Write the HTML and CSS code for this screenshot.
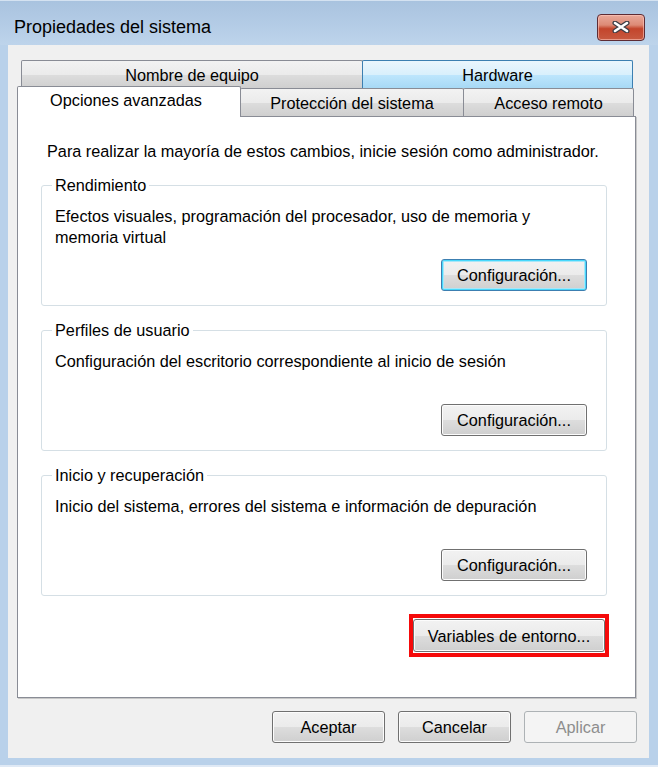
FILE: index.html
```html
<!DOCTYPE html>
<html lang="es">
<head>
<meta charset="utf-8">
<title>Propiedades del sistema</title>
<link rel="stylesheet" href="styles.css">
</head>
<body>
<div class="window">
  <div class="titlebar">
    <span class="title">Propiedades del sistema</span>
    <button class="close" aria-label="Cerrar">
      <svg width="18" height="12" viewBox="0 0 18 12">
        <path d="M3 2 L15 10 M15 2 L3 10" stroke="#3d3d45" stroke-width="5" stroke-linecap="round" fill="none"/>
        <path d="M3 2 L15 10 M15 2 L3 10" stroke="#ffffff" stroke-width="2.6" stroke-linecap="round" fill="none"/>
      </svg>
    </button>
  </div>
  <div class="client">
    <div class="tabs">
      <div class="tabrow back">
        <div class="tab t-nombre">Nombre de equipo</div>
        <div class="tab t-hw hover">Hardware</div>
      </div>
      <div class="tabrow front">
        <div class="tab active t-opc">Opciones avanzadas</div>
        <div class="tab t-prot">Protección del sistema</div>
        <div class="tab t-acc">Acceso remoto</div>
      </div>
    </div>
    <div class="panel">
      <p class="intro">Para realizar la mayoría de estos cambios, inicie sesión como administrador.</p>
      <div class="group">
        <span class="group-title">Rendimiento</span>
        <p class="group-text">Efectos visuales, programación del procesador, uso de memoria y<br>memoria virtual</p>
        <button class="btn btn-config focused">Configuración...</button>
      </div>
      <div class="group">
        <span class="group-title">Perfiles de usuario</span>
        <p class="group-text">Configuración del escritorio correspondiente al inicio de sesión</p>
        <button class="btn btn-config">Configuración...</button>
      </div>
      <div class="group">
        <span class="group-title">Inicio y recuperación</span>
        <p class="group-text">Inicio del sistema, errores del sistema e información de depuración</p>
        <button class="btn btn-config">Configuración...</button>
      </div>
      <div class="env-row">
        <span class="highlight"><button class="btn btn-env">Variables de entorno...</button></span>
      </div>
    </div>
    <div class="footer">
      <button class="btn btn-foot">Aceptar</button>
      <button class="btn btn-foot">Cancelar</button>
      <button class="btn btn-foot disabled">Aplicar</button>
    </div>
  </div>
</div>
</body>
</html>
```
FILE: styles.css
```css
* { box-sizing: border-box; }
html, body { margin: 0; padding: 0; }
body {
  background: #ffffff;
  font-family: "Liberation Sans", Arial, sans-serif;
  font-size: 16.25px;
  color: #000;
}
.window {
  width: 658px;
  height: 767px;
  background: #b9d1ea;
  border-top: 1px solid #d4e2f1;
  padding: 0 9px 9px 8px;
  display: flex;
  flex-direction: column;
  box-shadow: inset 0 -2px 0 #dfe9f5;
}
.titlebar {
  height: 44px;
  margin: 0 -9px 0 -8px;
  padding: 10px 13px 0 14px;
  background: linear-gradient(#a9c3df 0%, #b4cce6 55%, #bed4eb 100%);
  display: flex;
  align-items: center;
  justify-content: space-between;
}
.title {
  font-size: 18px;
  color: #000;
  margin-top: -1px;
}
.close {
  width: 48px;
  height: 27px;
  margin-top: -2px;
  border: 1px solid #5e2c34;
  border-radius: 4px;
  background: linear-gradient(#e9a99a 0%, #dd8a76 40%, #c3452c 55%, #c75a41 100%);
  box-shadow: inset 0 0 0 1px rgba(255, 200, 190, 0.6);
  padding: 0;
  display: flex;
  align-items: center;
  justify-content: center;
}
.client {
  flex: 1;
  background: #f0f0f0;
  padding-top: 15px;
  display: flex;
  flex-direction: column;
}
.tabs {
  display: flex;
  flex-direction: column;
}
.tabrow { display: flex; }
.back {
  margin-left: 13px;
  width: 612px;
  height: 28px;
}
.front {
  margin-left: 9px;
  margin-top: -2px;
  height: 30px;
  align-items: flex-end;
  position: relative;
  z-index: 1;
}
.tab {
  height: 28px;
  border: 1px solid #898c95;
  border-bottom: none;
  border-radius: 2px 2px 0 0;
  background: linear-gradient(#f2f2f2 0%, #ebebeb 50%, #dddddd 51%, #cfcfcf 100%);
  display: flex;
  align-items: center;
  justify-content: center;
  padding-top: 1px;
  line-height: 20px;
}
.t-nombre { width: 342px; }
.t-hw { width: 271px; margin-left: -1px; }
.hover {
  border-color: #3c7fb1;
  background: linear-gradient(#eaf6fd 0%, #d9f0fc 50%, #bee6fd 51%, #a7d9f5 100%);
}
.active {
  width: 224px;
  height: 31px;
  margin-bottom: -1px;
  background: #ffffff;
  padding-top: 0;
  padding-bottom: 4px;
  padding-right: 6px;
}
.t-prot { width: 224px; margin-left: -1px; }
.t-acc { width: 171px; margin-left: -1px; }
.panel {
  margin-left: 9px;
  width: 619px;
  height: 582px;
  background: #ffffff;
  border: 1px solid #898c95;
  box-shadow: 1px 1px 0 #c8c8c8;
  padding: 24px 0 0 0;
  display: flex;
  flex-direction: column;
}
.intro {
  margin: 0 0 23px 29px;
  line-height: 21px;
}
.group {
  margin: 0 28px 24px 23px;
  height: 121px;
  border: 1px solid #d5dfe5;
  border-radius: 3px;
  padding: 0 19px 14px 13px;
  display: flex;
  flex-direction: column;
}
.group-title {
  align-self: flex-start;
  margin: -11px 0 0 -3px;
  padding: 0 3px;
  background: #ffffff;
  line-height: 20px;
}
.group-text {
  margin: 11px 0 0 0;
  line-height: 21px;
}
.btn {
  font-family: "Liberation Sans", Arial, sans-serif;
  font-size: 16.25px;
  color: #000;
  border: 1px solid #707070;
  border-radius: 3px;
  background: linear-gradient(#f2f2f2 0%, #ebebeb 50%, #dddddd 51%, #cfcfcf 100%);
  box-shadow: inset 0 0 0 1px #fcfcfc;
  padding: 0;
  line-height: 20px;
}
.btn-config {
  width: 146px;
  height: 32px;
  margin-top: auto;
  align-self: flex-end;
}
.focused {
  border-color: #3c7fb1;
  box-shadow: inset 0 0 0 1px #48d8fb, inset 0 0 0 2px #a8e6f8;
}
.env-row {
  display: flex;
  justify-content: flex-end;
  margin: -6px 26px 0 0;
}
.highlight {
  border: 4px solid #f50a0a;
  padding: 1px 0;
  display: flex;
}
.btn-env {
  width: 192px;
  height: 33px;
}
.footer {
  display: flex;
  justify-content: flex-end;
  gap: 13px;
  margin: 13px 12px 0 0;
}
.btn-foot {
  width: 113px;
  height: 32px;
}
.disabled {
  color: #8d8d8d;
  border-color: #adb2b5;
  background: #f4f4f4;
  box-shadow: none;
}
```
